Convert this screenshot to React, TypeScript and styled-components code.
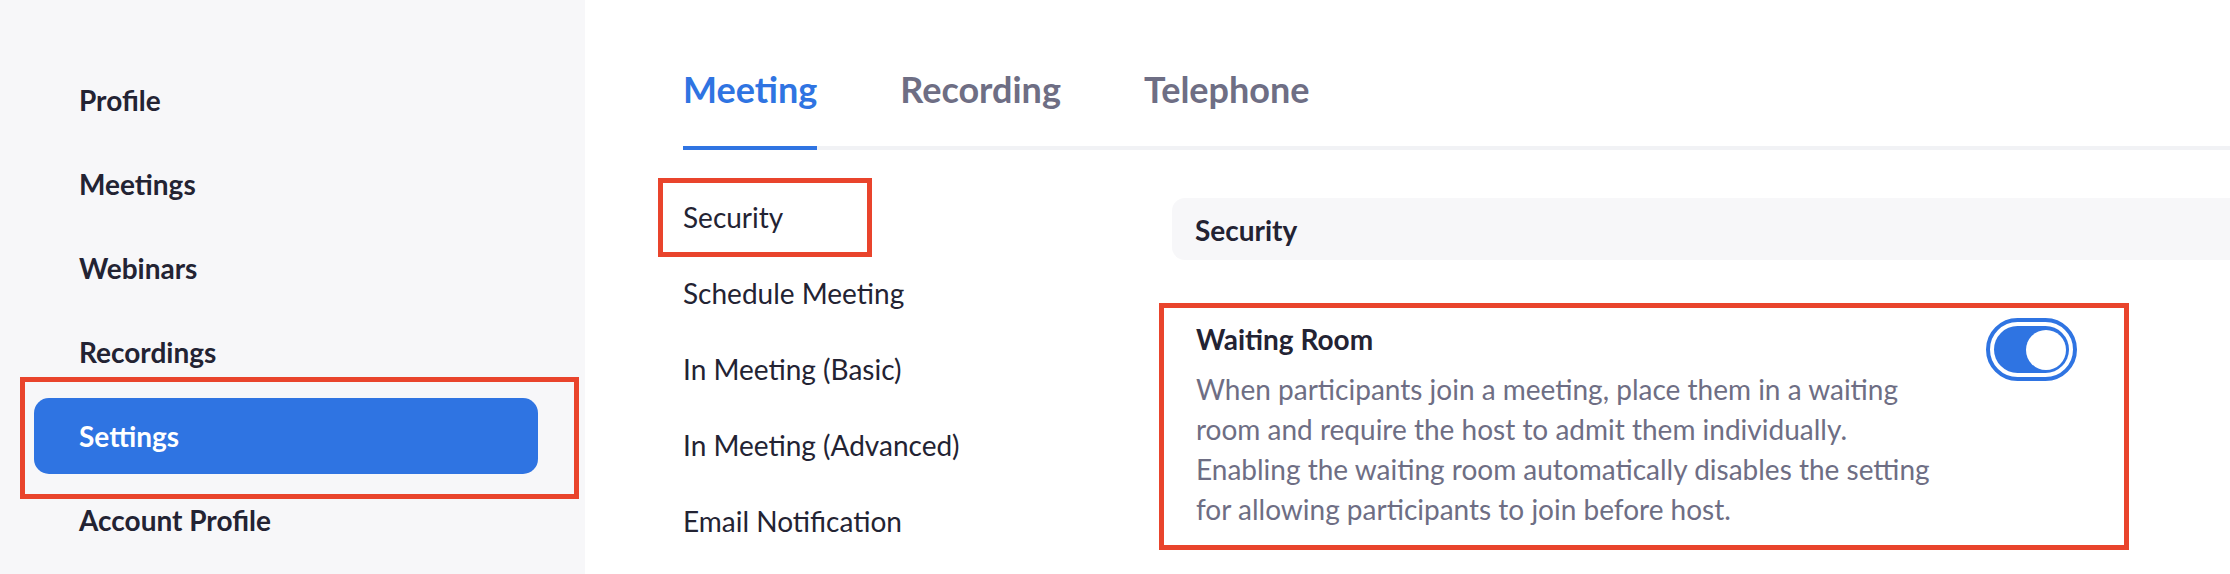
import React from "react";
import styled, { createGlobalStyle, css } from "styled-components";

const BLUE = "#2f74e2";
const RED = "#e9442c";
const DARK = "#232333";
const GRAY = "#6e6e84";
const PANEL_BG = "#f7f7f9";

const GlobalStyle = createGlobalStyle`
  html, body {
    margin: 0;
    padding: 0;
    background: #ffffff;
  }
  body {
    font-family: Lato, "Noto Sans", sans-serif;
    color: ${DARK};
    -webkit-font-smoothing: antialiased;
  }
`;

const Page = styled.div`
  display: flex;
  width: 2230px;
  height: 574px;
  overflow: hidden;
`;

const Sidebar = styled.aside`
  flex: 0 0 585px;
  background: ${PANEL_BG};
  padding-top: 58px;
  box-sizing: border-box;
`;

const NavList = styled.nav`
  display: flex;
  flex-direction: column;
  padding-left: 34px;
`;

const annotation = css`
  &::after {
    content: "";
    position: absolute;
    box-sizing: border-box;
    border: 5px solid ${RED};
    pointer-events: none;
  }
`;

const NavItem = styled.a<{ $active?: boolean; $annotated?: boolean }>`
  position: relative;
  display: flex;
  align-items: center;
  box-sizing: border-box;
  width: 504px;
  height: 76px;
  margin: 4px 0;
  padding-left: 45px;
  border-radius: 15px;
  font-size: 28px;
  font-weight: 700;
  color: ${(p) => (p.$active ? "#ffffff" : DARK)};
  background: ${(p) => (p.$active ? BLUE : "transparent")};
  text-decoration: none;
  ${(p) =>
    p.$annotated &&
    css`
      ${annotation}
      &::after {
        left: -14px;
        top: -21px;
        right: -41px;
        bottom: -25px;
      }
    `}
`;

const Main = styled.main`
  flex: 1;
  min-width: 0;
  padding-left: 98px;
`;

const TabBar = styled.div`
  display: flex;
  border-bottom: 4px solid #f1f2f5;
`;

const Tab = styled.div<{ $active?: boolean }>`
  padding: 67px 0 35px;
  margin-right: 83px;
  margin-bottom: -4px;
  line-height: 44px;
  font-size: 36px;
  font-weight: 700;
  color: ${(p) => (p.$active ? BLUE : GRAY)};
  border-bottom: 4px solid ${(p) => (p.$active ? BLUE : "transparent")};
`;

const Content = styled.div`
  display: flex;
  align-items: flex-start;
`;

const SubNav = styled.div`
  flex: 0 0 489px;
  padding-top: 29px;
  display: flex;
  flex-direction: column;
`;

const SubItem = styled.div<{ $annotated?: boolean }>`
  position: relative;
  height: 76px;
  line-height: 76px;
  font-size: 28px;
  font-weight: 400;
  color: ${DARK};
  ${(p) =>
    p.$annotated &&
    css`
      ${annotation}
      &::after {
        left: -25px;
        top: -1px;
        width: 214px;
        height: 79px;
      }
    `}
`;

const Panel = styled.section`
  flex: 1;
  min-width: 0;
  padding-top: 48px;
`;

const SectionHeader = styled.div`
  display: flex;
  align-items: center;
  height: 62px;
  padding: 2px 0 0 23px;
  box-sizing: border-box;
  margin-right: -20px;
  border-radius: 13px;
  background: ${PANEL_BG};
  font-size: 28px;
  font-weight: 700;
  color: ${DARK};
`;

const SettingRow = styled.div`
  display: flex;
  justify-content: space-between;
  align-items: flex-start;
  box-sizing: border-box;
  width: 970px;
  margin: 43px 0 0 -13px;
  padding: 10px 47px 16px 32px;
  border: 5px solid ${RED};
`;

const SettingText = styled.div`
  padding-top: 3px;
  max-width: 750px;
`;

const SettingTitle = styled.div`
  font-size: 28px;
  line-height: 36px;
  font-weight: 700;
  color: ${DARK};
`;

const SettingDesc = styled.p`
  margin: 12px 0 0;
  font-size: 28px;
  line-height: 40px;
  font-weight: 400;
  color: ${GRAY};
`;

const Toggle = styled.div<{ $on?: boolean }>`
  flex: 0 0 auto;
  display: flex;
  box-sizing: border-box;
  width: 91px;
  height: 63px;
  padding: 4px;
  border: 4px solid ${BLUE};
  border-radius: 32px;
`;

const Track = styled.div<{ $on?: boolean }>`
  flex: 1;
  display: flex;
  align-items: center;
  justify-content: ${(p) => (p.$on ? "flex-end" : "flex-start")};
  padding: 0 3px;
  border-radius: 24px;
  background: ${(p) => (p.$on ? BLUE : "#c1c1cc")};
`;

const Knob = styled.div`
  width: 40px;
  height: 40px;
  border-radius: 50%;
  background: #ffffff;
`;

const sidebarItems = [
  "Profile",
  "Meetings",
  "Webinars",
  "Recordings",
  "Settings",
  "Account Profile",
];

const subItems = [
  "Security",
  "Schedule Meeting",
  "In Meeting (Basic)",
  "In Meeting (Advanced)",
  "Email Notification",
];

export default function App() {
  return (
    <>
      <GlobalStyle />
      <Page>
        <Sidebar>
          <NavList>
            {sidebarItems.map((label) => (
              <NavItem
                key={label}
                $active={label === "Settings"}
                $annotated={label === "Settings"}
              >
                {label}
              </NavItem>
            ))}
          </NavList>
        </Sidebar>
        <Main>
          <TabBar>
            <Tab $active>Meeting</Tab>
            <Tab>Recording</Tab>
            <Tab>Telephone</Tab>
          </TabBar>
          <Content>
            <SubNav>
              {subItems.map((label) => (
                <SubItem key={label} $annotated={label === "Security"}>
                  {label}
                </SubItem>
              ))}
            </SubNav>
            <Panel>
              <SectionHeader>Security</SectionHeader>
              <SettingRow>
                <SettingText>
                  <SettingTitle>Waiting Room</SettingTitle>
                  <SettingDesc>
                    When participants join a meeting, place them in a waiting
                    room and require the host to admit them individually.
                    Enabling the waiting room automatically disables the
                    setting for allowing participants to join before host.
                  </SettingDesc>
                </SettingText>
                <Toggle $on>
                  <Track $on>
                    <Knob />
                  </Track>
                </Toggle>
              </SettingRow>
            </Panel>
          </Content>
        </Main>
      </Page>
    </>
  );
}
